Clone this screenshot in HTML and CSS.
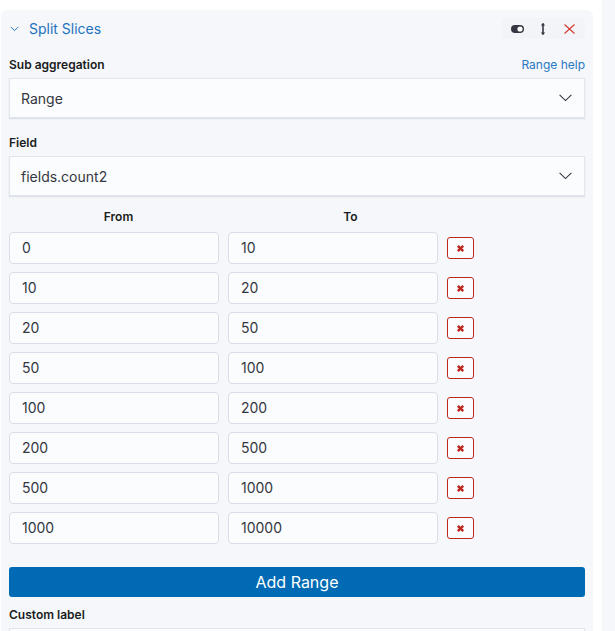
FILE: index.html
```html
<!DOCTYPE html>
<html>
<head>
<meta charset="utf-8">
<link rel="stylesheet" href="styles.css">
</head>
<body>
<div class="page">
  <div class="panel">
    <div class="header">
      <svg class="chev" width="9" height="6" viewBox="0 0 9 6"><path d="M0.8 1 L4.5 4.6 L8.2 1" fill="none" stroke="#2a78c2" stroke-width="1"/></svg>
      <span class="title">Split Slices</span>
      <div class="tools">
        <svg class="ico-toggle" width="13" height="8" viewBox="0 0 13 8"><rect x="0" y="0" width="13" height="8" rx="4" fill="#343741"/><circle cx="9" cy="4" r="2.6" fill="#fff"/></svg>
        <svg class="ico-sort" width="8" height="14" viewBox="0 0 8 14"><path d="M4 1.5 V12.5" stroke="#343741" stroke-width="1.6"/><path d="M1.8 3.6 L4 1 L6.2 3.6 Z M1.8 10.4 L4 13 L6.2 10.4 Z" fill="#343741"/></svg>
        <svg class="ico-close" width="11" height="10" viewBox="0 0 11 10"><path d="M0.5 0.5 L10.5 9.5 M10.5 0.5 L0.5 9.5" stroke="#d23a2f" stroke-width="1.1"/></svg>
      </div>
    </div>

    <div class="label-row first">
      <span class="label">Sub aggregation</span>
      <span class="help">Range help</span>
    </div>
    <div class="select">
      <span>Range</span>
      <svg width="13" height="8" viewBox="0 0 13 8"><path d="M0.6 0.8 L6.5 6.6 L12.4 0.8" fill="none" stroke="#343741" stroke-width="1.1"/></svg>
    </div>

    <div class="label-row">
      <span class="label">Field</span>
    </div>
    <div class="select">
      <span>fields.count2</span>
      <svg width="13" height="8" viewBox="0 0 13 8"><path d="M0.6 0.8 L6.5 6.6 L12.4 0.8" fill="none" stroke="#343741" stroke-width="1.1"/></svg>
    </div>

    <div class="range-head">
      <span>From</span>
      <span>To</span>
    </div>
    <div class="ranges">
      <div class="range-row"><div class="input">0</div><div class="input">10</div><button class="del"><svg width="9" height="9" viewBox="0 0 9 9"><path d="M1.8 1.8 L7.2 7.2 M7.2 1.8 L1.8 7.2" stroke="#bd271e" stroke-width="2.4"/></svg></button></div>
      <div class="range-row"><div class="input">10</div><div class="input">20</div><button class="del"><svg width="9" height="9" viewBox="0 0 9 9"><path d="M1.8 1.8 L7.2 7.2 M7.2 1.8 L1.8 7.2" stroke="#bd271e" stroke-width="2.4"/></svg></button></div>
      <div class="range-row"><div class="input">20</div><div class="input">50</div><button class="del"><svg width="9" height="9" viewBox="0 0 9 9"><path d="M1.8 1.8 L7.2 7.2 M7.2 1.8 L1.8 7.2" stroke="#bd271e" stroke-width="2.4"/></svg></button></div>
      <div class="range-row"><div class="input">50</div><div class="input">100</div><button class="del"><svg width="9" height="9" viewBox="0 0 9 9"><path d="M1.8 1.8 L7.2 7.2 M7.2 1.8 L1.8 7.2" stroke="#bd271e" stroke-width="2.4"/></svg></button></div>
      <div class="range-row"><div class="input">100</div><div class="input">200</div><button class="del"><svg width="9" height="9" viewBox="0 0 9 9"><path d="M1.8 1.8 L7.2 7.2 M7.2 1.8 L1.8 7.2" stroke="#bd271e" stroke-width="2.4"/></svg></button></div>
      <div class="range-row"><div class="input">200</div><div class="input">500</div><button class="del"><svg width="9" height="9" viewBox="0 0 9 9"><path d="M1.8 1.8 L7.2 7.2 M7.2 1.8 L1.8 7.2" stroke="#bd271e" stroke-width="2.4"/></svg></button></div>
      <div class="range-row"><div class="input">500</div><div class="input">1000</div><button class="del"><svg width="9" height="9" viewBox="0 0 9 9"><path d="M1.8 1.8 L7.2 7.2 M7.2 1.8 L1.8 7.2" stroke="#bd271e" stroke-width="2.4"/></svg></button></div>
      <div class="range-row"><div class="input">1000</div><div class="input">10000</div><button class="del"><svg width="9" height="9" viewBox="0 0 9 9"><path d="M1.8 1.8 L7.2 7.2 M7.2 1.8 L1.8 7.2" stroke="#bd271e" stroke-width="2.4"/></svg></button></div>
    </div>

    <button class="add">Add Range</button>

    <div class="label-row custom">
      <span class="label">Custom label</span>
    </div>
    <div class="select empty"></div>
  </div>
  <div class="side"></div>
</div>
</body>
</html>
```

FILE: styles.css
```css
* { box-sizing: border-box; }
html, body {
  margin: 0;
  padding: 0;
  background: #ffffff;
  font-family: Inter, "Noto Sans", "DejaVu Sans", sans-serif;
  color: #343741;
  overflow: hidden;
}
.page {
  display: flex;
  height: 631px;
}
.panel {
  width: 592px;
  margin: 10px 0 0 1px;
  background: #f5f7fa;
  border-radius: 6px 6px 0 0;
  padding: 8px 8px 0 8px;
}
.side {
  width: 13px;
  margin-left: 9px;
  background: #f5f7fa;
}
.header {
  display: flex;
  align-items: center;
  height: 21px;
}
.chev {
  margin-left: 1px;
  margin-right: 10px;
}
.title {
  font-size: 14px;
  color: #1f72be;
  line-height: 21px;
}
.tools {
  margin-left: auto;
  width: 83px;
  height: 21px;
  background: #f2f4f8;
  border-radius: 4px;
  display: flex;
  align-items: center;
  padding-left: 9px;
}
.ico-sort { margin-left: 15px; }
.ico-close { margin-left: 17px; }

.label-row {
  display: flex;
  justify-content: space-between;
  align-items: center;
  height: 16px;
  margin-top: 16px;
  margin-bottom: 6px;
}
.label-row.first { margin-top: 17px; }
.label-row.custom { margin-top: 9px; }
.label {
  font-size: 12px;
  font-weight: 600;
  color: #1a1c21;
}
.help {
  font-size: 12px;
  color: #2a78c2;
}
.select {
  height: 40px;
  background: #fbfcfd;
  border: 1px solid #e1e5ed;
  box-shadow: 0 1px 1px rgba(152, 162, 179, 0.25);
  display: flex;
  align-items: center;
  justify-content: space-between;
  padding: 0 12px 0 11px;
  font-size: 14px;
  color: #343741;
}
.range-head {
  display: grid;
  grid-template-columns: 219px 245px;
  margin-top: 13px;
  height: 16px;
  line-height: 16px;
  font-size: 12px;
  font-weight: 600;
  color: #1a1c21;
  text-align: center;
}
.ranges {
  margin-top: 7px;
  display: flex;
  flex-direction: column;
  gap: 8px;
}
.range-row {
  display: flex;
  align-items: center;
  gap: 9px;
  height: 32px;
}
.input {
  width: 210px;
  height: 32px;
  border: 1px solid #d9dfe9;
  border-radius: 4px;
  background: #fbfcfd;
  font-size: 14px;
  line-height: 30px;
  padding-left: 12px;
  color: #343741;
}
.del {
  width: 27px;
  height: 22px;
  border: 1px solid #bd271e;
  border-radius: 3px;
  background: #fbfcfd;
  display: flex;
  align-items: center;
  justify-content: center;
  padding: 0;
}
.add {
  display: block;
  width: 100%;
  height: 30px;
  margin-top: 23px;
  border: none;
  border-radius: 3px;
  background: #006bb4;
  color: #ffffff;
  font-family: Inter, "Noto Sans", sans-serif;
  font-size: 16px;
  font-weight: 400;
  padding: 0;
}
.select.empty {
  height: 40px;
}
```
